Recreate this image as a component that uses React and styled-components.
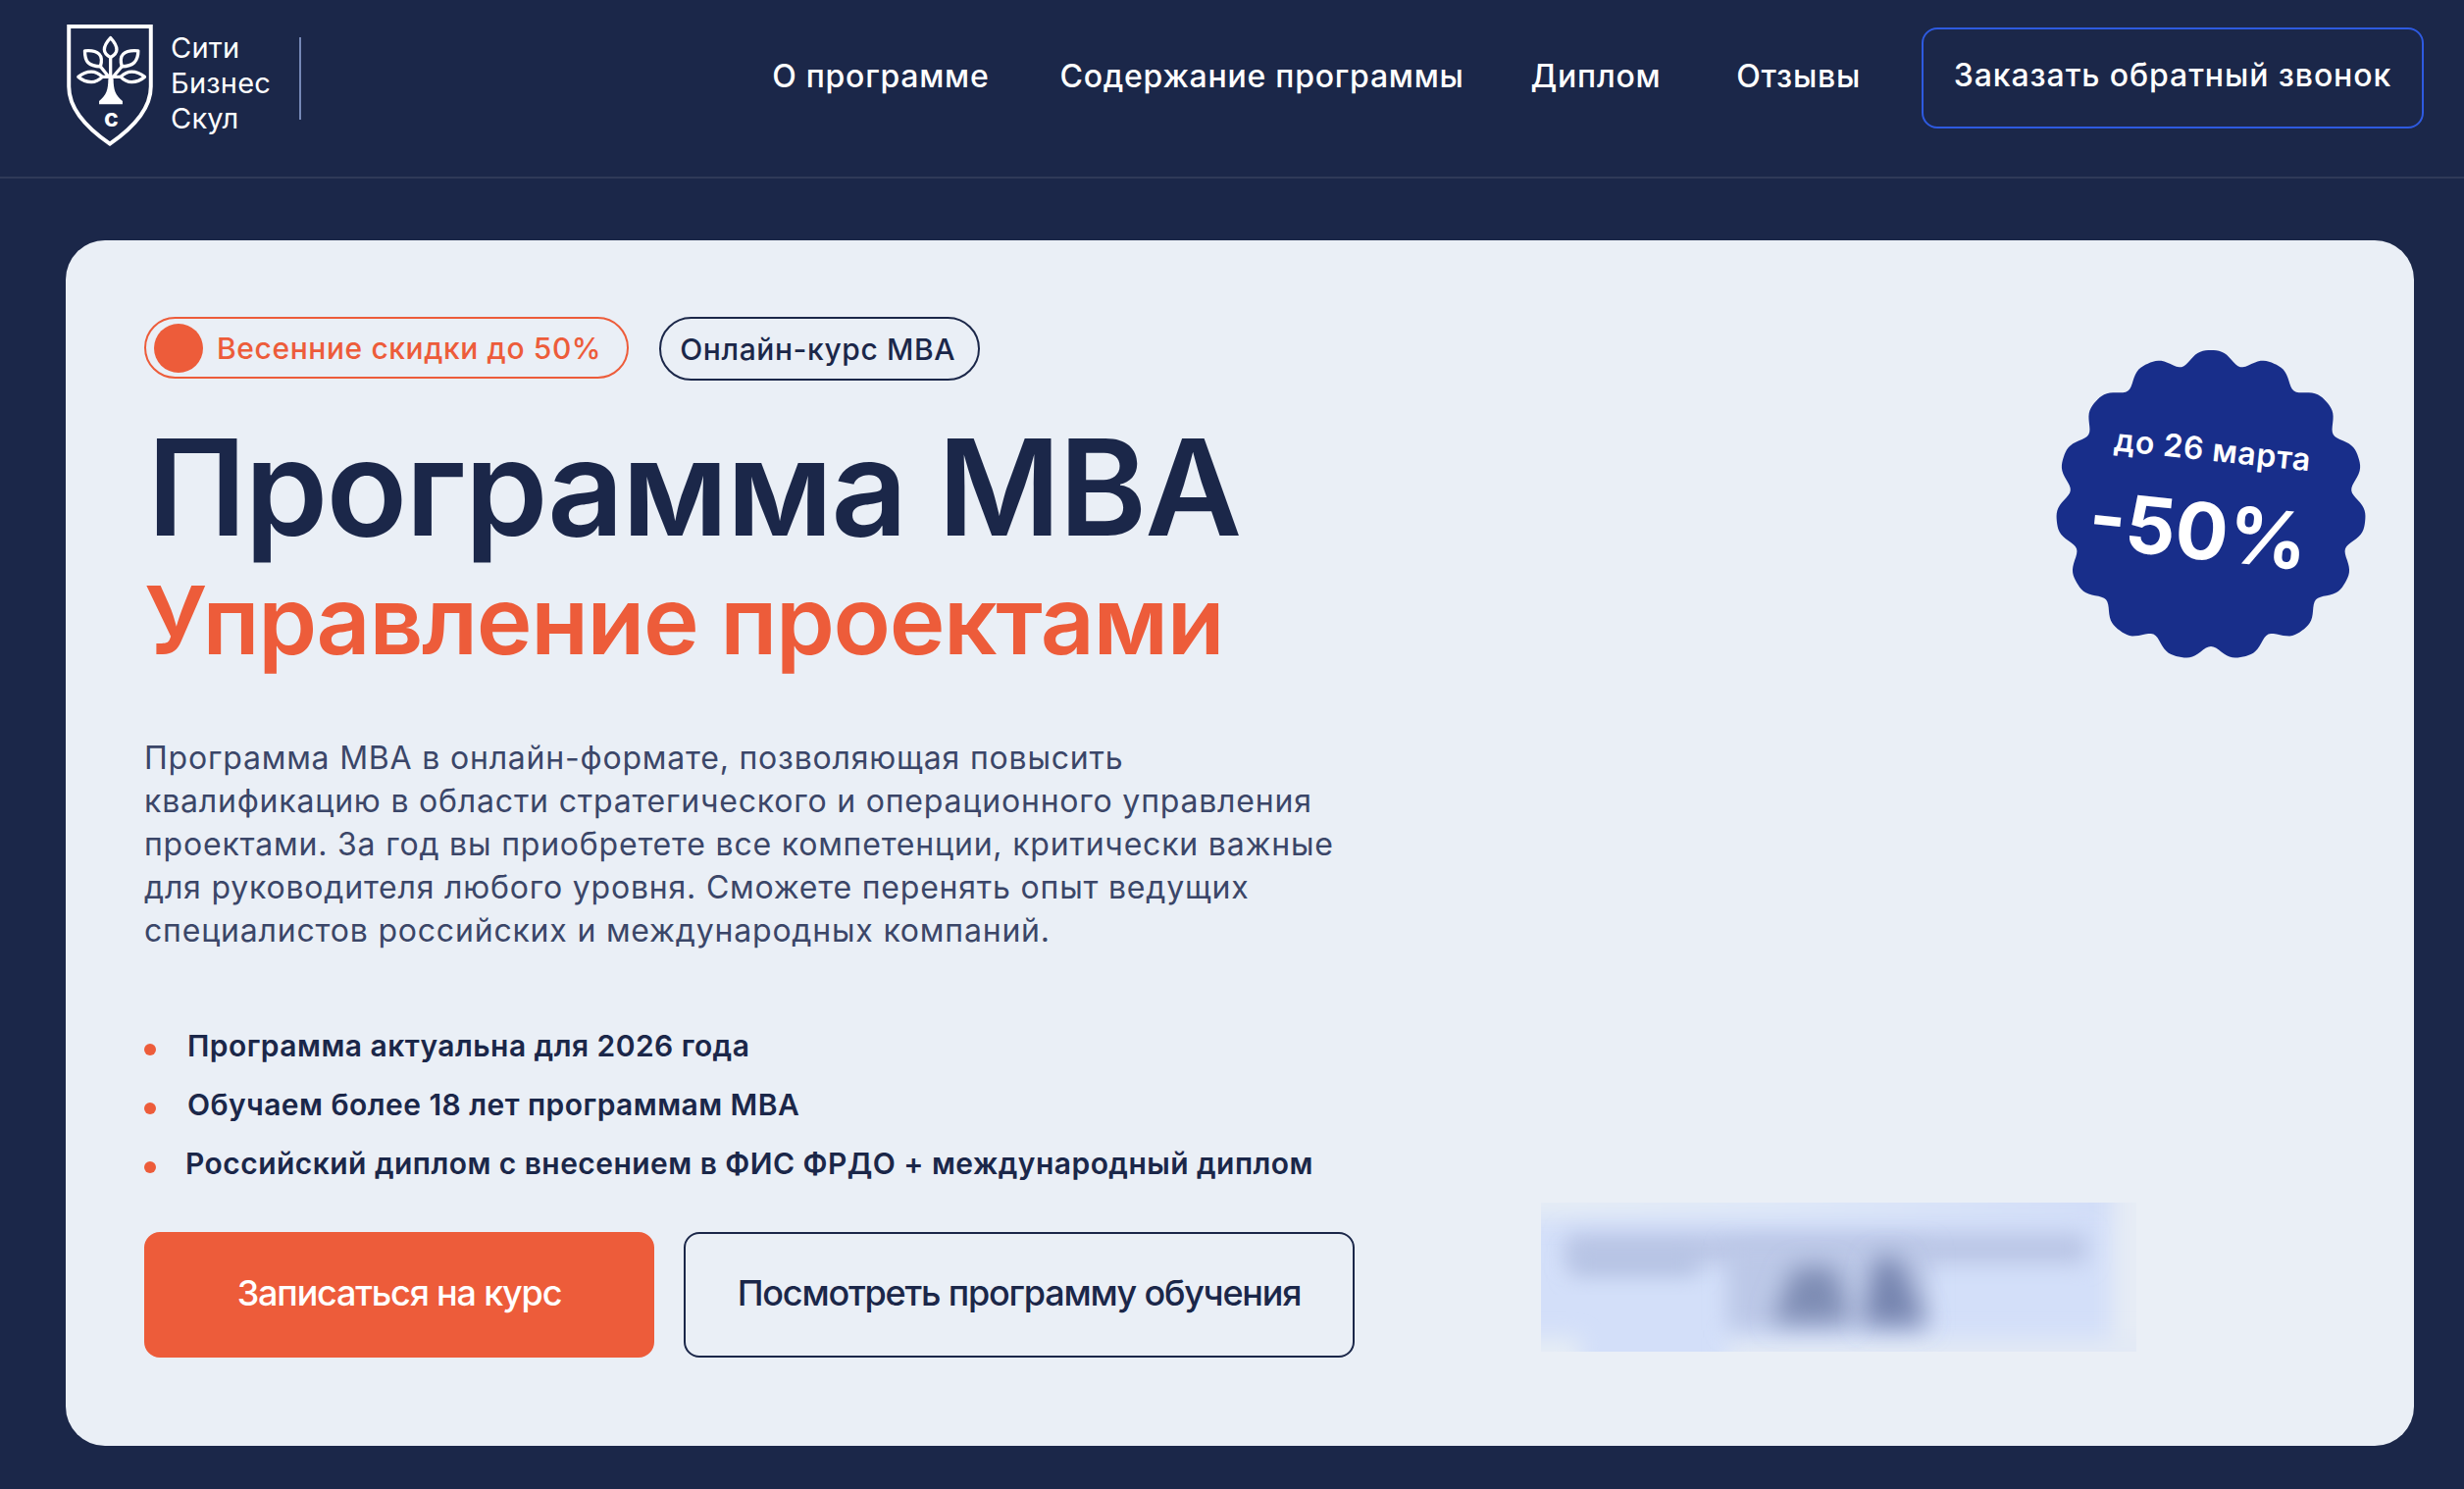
import styled, { createGlobalStyle } from "styled-components";

const NAVY = "#1b2749";
const ORANGE = "#ed5c3a";

const GlobalStyle = createGlobalStyle`
  html, body {
    margin: 0;
    padding: 0;
    background: ${NAVY};
    font-family: "Inter", "Noto Sans", sans-serif;
  }
  * {
    box-sizing: border-box;
  }
`;

const navItems = ["О программе", "Содержание программы", "Диплом", "Отзывы"];

const bullets = [
  "Программа актуальна для 2026 года",
  "Обучаем более 18 лет программам MBA",
  "Российский диплом с внесением в ФИС ФРДО + международный диплом",
];

// scalloped seal, 15 bumps with one on top
function sealPath(cx, cy) {
  const pts = [];
  for (let i = 0; i < 360; i++) {
    const a = (i * 2 * Math.PI) / 360;
    const r = 152.5 + 7 * Math.cos(15 * a) - 1.5 * Math.cos(30 * a);
    pts.push(`${(cx + r * Math.sin(a)).toFixed(2)} ${(cy - r * Math.cos(a)).toFixed(2)}`);
  }
  return `M${pts.join("L")}Z`;
}

function LogoMark() {
  return (
    <svg width="90" height="126" viewBox="78 68 270 380" fill="none">
      <path
        d="M87 77H339V262C339 335 280 392 213 438C146 392 87 335 87 262Z"
        stroke="#fff"
        strokeWidth="12"
      />
      <g stroke="#fff" strokeWidth="10" strokeLinejoin="round">
        <path d="M215 112C228 126 234 138 234 148C234 158 226 166 215 172C204 166 196 158 196 148C196 138 202 126 215 112Z" />
        <path d="M136 152C158 150 172 154 180 162C188 170 188 186 184 200C168 200 154 196 146 188C138 180 136 166 136 152Z" />
        <path d="M300 152C278 150 262 154 254 162C246 170 246 186 250 200C266 200 280 196 288 188C296 180 300 166 300 152Z" />
        <path d="M116 232C130 220 144 216 156 216C170 216 182 224 190 232C182 240 170 248 156 248C144 248 130 244 116 232Z" />
        <path d="M320 232C306 220 292 216 280 216C266 216 254 224 246 232C254 240 266 248 280 248C292 248 306 244 320 232Z" />
        <path d="M184 200L216 240M250 200L216 240M190 232H246M215 172V250" />
      </g>
      <path d="M208 240H224C224 270 230 290 252 306V316H180V306C202 290 208 270 208 240Z" fill="#fff" />
      <text x="217" y="386" textAnchor="middle" fontFamily="Inter, sans-serif" fontWeight="700" fontSize="76" fill="#fff">
        с
      </text>
    </svg>
  );
}

export default function App() {
  return (
    <Page>
      <GlobalStyle />
      <Header>
        <Brand>
          <LogoMark />
          <BrandName>
            Сити
            <br />
            Бизнес
            <br />
            Скул
          </BrandName>
          <BrandDivider />
        </Brand>
        <Nav>
          {navItems.map((item) => (
            <NavLink key={item}>{item}</NavLink>
          ))}
        </Nav>
        <CallButton>Заказать обратный звонок</CallButton>
      </Header>
      <Main>
        <HeroCard>
          <Seal>
            <svg width="320" height="320" viewBox="0 0 320 320">
              <path d={sealPath(160, 160)} fill="#182e8a" />
            </svg>
            <SealText>
              <SealDate>до 26 марта</SealDate>
              <SealValue>-50%</SealValue>
            </SealText>
          </Seal>
          <Pills>
            <Pill $accent>
              <PillDot />
              Весенние скидки до 50%
            </Pill>
            <Pill>Онлайн-курс MBA</Pill>
          </Pills>
          <Title>Программа MBA</Title>
          <Subtitle>Управление проектами</Subtitle>
          <Lead>
            Программа MBA в онлайн-формате, позволяющая повысить
            <br />
            квалификацию в области стратегического и операционного управления
            <br />
            проектами. За год вы приобретете все компетенции, критически важные
            <br />
            для руководителя любого уровня. Сможете перенять опыт ведущих
            <br />
            специалистов российских и международных компаний.
          </Lead>
          <BulletList>
            {bullets.map((text) => (
              <BulletItem key={text}>{text}</BulletItem>
            ))}
          </BulletList>
          <BottomRow>
            <Actions>
              <ActionButton $primary>Записаться на курс</ActionButton>
              <ActionButton>Посмотреть программу обучения</ActionButton>
            </Actions>
            <BlurredNote>
              <svg width="607" height="152" viewBox="0 0 607 152">
                <defs>
                  <filter id="soft" x="-30%" y="-80%" width="160%" height="260%">
                    <feGaussianBlur stdDeviation="11" />
                  </filter>
                  <filter id="softer" x="-50%" y="-60%" width="200%" height="220%">
                    <feGaussianBlur stdDeviation="13" />
                  </filter>
                  <linearGradient id="topEdge" x1="0" x2="1" y1="0" y2="0">
                    <stop offset="0" stopColor="#e6edf5" />
                    <stop offset="0.45" stopColor="#dfe8f8" />
                    <stop offset="1" stopColor="#d0dcf8" />
                  </linearGradient>
                </defs>
                <rect width="607" height="152" fill="#d3dff9" />
                <rect x="-30" y="-30" width="640" height="46" fill="url(#topEdge)" filter="url(#soft)" />
                <rect x="582" y="-30" width="60" height="210" fill="#e6ecf5" filter="url(#soft)" />
                <rect x="190" y="138" width="450" height="44" fill="#e2e9f5" filter="url(#soft)" />
                <rect x="-30" y="138" width="70" height="44" fill="#e6edf5" filter="url(#soft)" />
                <rect x="26" y="32" width="530" height="30" fill="#b9c5e5" filter="url(#soft)" />
                <rect x="30" y="50" width="130" height="24" fill="#b4c1e2" filter="url(#soft)" />
                <rect x="190" y="44" width="206" height="86" fill="#bcc8e7" filter="url(#soft)" />
                <path d="M258 66L300 66L316 122L236 122Z" fill="#7e8cb4" filter="url(#softer)" />
                <path d="M342 56L364 56L392 124L328 124Z" fill="#7483ae" filter="url(#softer)" />
              </svg>
            </BlurredNote>
          </BottomRow>
        </HeroCard>
      </Main>
    </Page>
  );
}

const Page = styled.div`
  width: 2512px;
  min-height: 1518px;
  background: ${NAVY};
`;

const Header = styled.header`
  display: flex;
  align-items: flex-start;
  height: 182px;
  padding: 24px 41px 0 67px;
  border-bottom: 2px solid #2f3a58;
`;

const Brand = styled.div`
  display: flex;
  align-items: flex-start;
`;

const BrandName = styled.div`
  width: 131px;
  margin: 7px 0 0 17px;
  color: #fff;
  font-size: 29px;
  line-height: 36px;
  letter-spacing: 0.2px;
`;

const BrandDivider = styled.span`
  width: 2px;
  height: 84px;
  margin-top: 14px;
  background: #7688b6;
`;

const Nav = styled.nav`
  display: flex;
  align-items: center;
  gap: 72px;
  height: 99px;
  margin: 4px 62px 0 auto;
`;

const NavLink = styled.span`
  color: #fff;
  font-size: 32px;
  font-weight: 500;
  letter-spacing: 0.75px;
  white-space: nowrap;
  &:nth-child(3) {
    margin-left: -4px;
  }
  &:last-child {
    margin-left: 5px;
  }
`;

const CallButton = styled.div`
  display: flex;
  align-items: center;
  justify-content: center;
  width: 512px;
  height: 103px;
  margin-top: 4px;
  padding-bottom: 6px;
  border: 2px solid #2e5ae0;
  border-radius: 16px;
  color: #fff;
  font-size: 32px;
  font-weight: 500;
  letter-spacing: 0.9px;
  white-space: nowrap;
`;

const Main = styled.main`
  padding: 63px 51px 43px 67px;
`;

const HeroCard = styled.section`
  position: relative;
  height: 1229px;
  padding: 78px 80px 0;
  border-radius: 40px;
  background: #eaeff6;
`;

const Seal = styled.div`
  position: absolute;
  top: 110px;
  right: 47px;
  width: 320px;
  height: 320px;
`;

const SealText = styled.div`
  position: absolute;
  inset: 0;
  padding-top: 85px;
  display: flex;
  flex-direction: column;
  align-items: center;
  color: #fff;
  transform: rotate(6deg);
`;

const SealDate = styled.div`
  padding-right: 8px;
  font-size: 32px;
  font-weight: 600;
  line-height: 38px;
  letter-spacing: 0.6px;
`;

const SealValue = styled.div`
  margin-top: 19px;
  padding-right: 20px;
  font-size: 80px;
  font-weight: 700;
  line-height: 90px;
`;

const Pills = styled.div`
  display: flex;
  gap: 31px;
`;

const Pill = styled.div`
  display: flex;
  align-items: center;
  gap: 14px;
  height: ${(p) => (p.$accent ? "63px" : "65px")};
  padding: ${(p) => (p.$accent ? "0 26px 0 8px" : "0 23px 0 19px")};
  border: 2px solid ${(p) => (p.$accent ? ORANGE : NAVY)};
  border-radius: 33px;
  color: ${(p) => (p.$accent ? ORANGE : NAVY)};
  font-size: 30px;
  font-weight: 500;
  letter-spacing: 0.6px;
  white-space: nowrap;
`;

const PillDot = styled.span`
  width: 50px;
  height: 50px;
  border-radius: 50%;
  background: ${ORANGE};
`;

const Title = styled.h1`
  margin: 34px 0 0 3px;
  color: ${NAVY};
  font-size: 136px;
  font-weight: 600;
  line-height: 150px;
  letter-spacing: -1.9px;
  white-space: nowrap;
`;

const Subtitle = styled.h2`
  margin: 5px 0 0;
  color: ${ORANGE};
  font-size: 96px;
  font-weight: 600;
  line-height: 110px;
  letter-spacing: -1.35px;
  white-space: nowrap;
`;

const Lead = styled.p`
  margin: 64px 0 0;
  color: #3b4668;
  font-size: 32px;
  line-height: 44px;
  letter-spacing: 0.8px;
  white-space: nowrap;
`;

const BulletList = styled.ul`
  list-style: none;
  margin: 75px 0 0;
  padding: 0;
  display: flex;
  flex-direction: column;
  gap: 20px;
`;

const BulletItem = styled.li`
  position: relative;
  padding-left: 44px;
  color: ${NAVY};
  font-size: 30px;
  font-weight: 600;
  line-height: 40px;
  letter-spacing: 0.45px;
  white-space: nowrap;
  &:last-child {
    padding-left: 42px;
  }
  &::before {
    content: "";
    position: absolute;
    left: 0;
    top: 18px;
    width: 12px;
    height: 12px;
    border-radius: 50%;
    background: ${ORANGE};
  }
`;

const BottomRow = styled.div`
  display: flex;
  align-items: flex-end;
  justify-content: space-between;
  margin-top: 20px;
  padding-right: 203px;
`;

const Actions = styled.div`
  display: flex;
  gap: 30px;
`;

const ActionButton = styled.div`
  display: flex;
  align-items: center;
  justify-content: center;
  width: ${(p) => (p.$primary ? "520px" : "684px")};
  height: 128px;
  padding-bottom: 5px;
  border: 2px solid ${(p) => (p.$primary ? ORANGE : NAVY)};
  border-radius: 16px;
  background: ${(p) => (p.$primary ? ORANGE : "transparent")};
  color: ${(p) => (p.$primary ? "#fff" : NAVY)};
  font-size: 36px;
  font-weight: 500;
  letter-spacing: -1.2px;
  white-space: nowrap;
`;

const BlurredNote = styled.div`
  width: 607px;
  height: 152px;
  margin-bottom: 6px;
  overflow: hidden;
  font-size: 0;
`;
